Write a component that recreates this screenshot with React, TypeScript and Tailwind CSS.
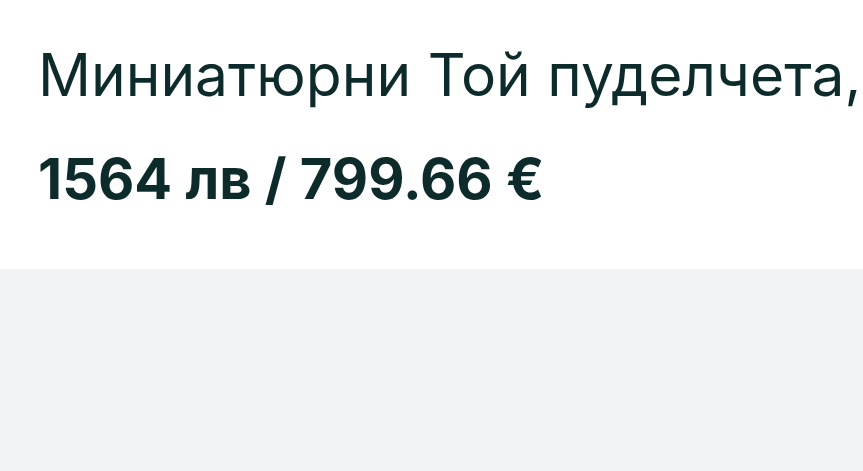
export default function App() {
  return (
    <div className="w-[863px] h-[471px] bg-[#f2f3f5] overflow-hidden" style={{ fontFamily: "Inter, 'Noto Sans', sans-serif" }}>
      <div className="bg-white h-[269px] pl-[38px] pt-[40px]">
        <h1 className="text-[58.7px] leading-[70px] font-normal text-[#0e2b2b] whitespace-nowrap">Миниатюрни Той пуделчета,</h1>
        <div className="mt-[39px] text-[56px] leading-[60px] font-bold text-[#0e2b2b] whitespace-nowrap">1564 лв / 799.66 €</div>
      </div>
    </div>
  );
}
